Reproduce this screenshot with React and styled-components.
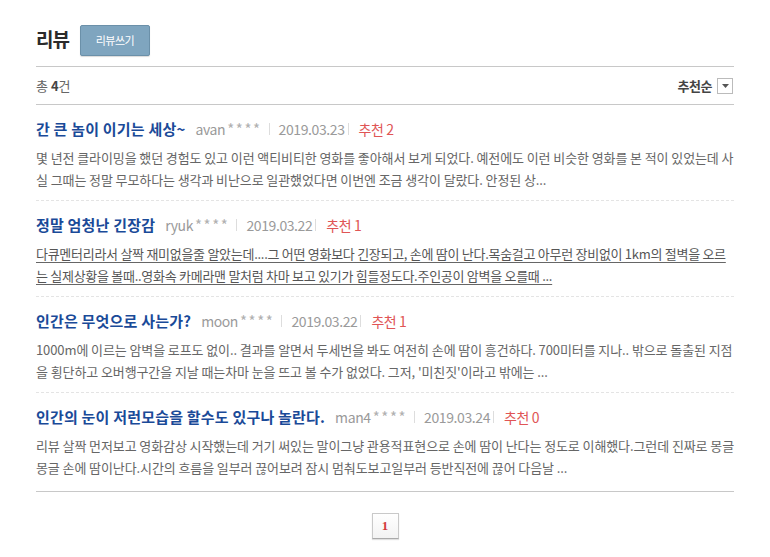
import React from "react";
import styled, { createGlobalStyle } from "styled-components";

const Global = createGlobalStyle`
  html, body { margin: 0; padding: 0; background: #fff; }
  body { font-family: "Noto Sans CJK KR", "Noto Sans", sans-serif; }
`;

const Wrap = styled.div`
  width: 698px;
  padding: 20px 36px 0;
`;

const Head = styled.div`
  display: flex;
  align-items: center;
  gap: 11px;
  height: 46px;
  border-bottom: 1px solid #c8c8c8;
`;

const Title = styled.h2`
  margin: 0;
  font-size: 19px;
  font-weight: 700;
  color: #2b2b2b;
  letter-spacing: -1px;
  line-height: 40px;
  padding-bottom: 8px;
`;

const WriteBtn = styled.button`
  width: 70px;
  height: 31px;
  margin-bottom: 6px;
  background: #7fa5bf;
  border: 1px solid #6b90a9;
  border-radius: 2px;
  color: #fff;
  font-family: inherit;
  font-size: 11px;
  letter-spacing: -0.5px;
  box-shadow: 0 1px 1px rgba(0,0,0,0.15);
`;

const SubBar = styled.div`
  display: flex;
  align-items: center;
  justify-content: space-between;
  height: 37px;
  border-bottom: 1px solid #c8c8c8;
  font-size: 13px;
  color: #666;
`;

const Count = styled.span`
  b { color: #444; font-weight: 700; }
`;

const Sort = styled.div`
  display: flex;
  align-items: center;
  gap: 5px;
  font-weight: 700;
  color: #444;
  font-size: 13px;
  letter-spacing: -0.5px;
`;

const SelBox = styled.span`
  display: inline-flex;
  align-items: center;
  justify-content: center;
  width: 14px;
  height: 14px;
  border: 1px solid #bbb;
  background: #fff;
  margin-right: 1px;
`;

const List = styled.ul`
  list-style: none;
  margin: 0;
  padding: 0;
  border-bottom: 1px solid #c8c8c8;
`;

const Item = styled.li`
  padding: 13px 0 ${p => (p.$last ? "12px" : "9px")};
  border-bottom: ${p => (p.$last ? "none" : "1px dashed #e4e4e4")};
`;

const ItemHead = styled.div`
  display: flex;
  align-items: baseline;
  height: 22px;
  line-height: 22px;
  margin-bottom: 7px;
  white-space: nowrap;
`;

const ItemTitle = styled.span`
  font-size: 15px;
  font-weight: 700;
  color: #1a4a98;
  letter-spacing: 0.2px;
  margin-right: 10px;
`;

const Meta = styled.span`
  font-size: 14px;
  color: ${p => (p.$red ? "#e05555" : "#9a9a9a")};
  letter-spacing: -0.4px;
`;

const Stars = styled.span`
  letter-spacing: 1.6px;
  margin-left: 2px;
  font-size: 15px;
  color: #b0b0b0;
`;

const Sep = styled.span`
  display: inline-block;
  width: 1px;
  height: 12px;
  background: #ddd;
  margin: 0 ${p => p.$r || 9}px 0 ${p => p.$l || 7}px;
`;

const Body = styled.p`
  margin: 0;
  font-size: 13px;
  line-height: 22px;
  color: ${p => (p.$under ? "#555" : "#666")};
  letter-spacing: ${p => p.$track ?? -0.1}px;
  text-decoration: ${p => (p.$under ? "underline" : "none")};
  text-underline-offset: 3px;
  text-decoration-color: #666;
  word-break: break-all;
`;

const Pager = styled.div`
  display: flex;
  justify-content: center;
  padding: 21px 0 20px;
`;

const PageBtn = styled.span`
  display: inline-flex;
  align-items: center;
  justify-content: center;
  width: 25px;
  height: 24px;
  border: 1px solid #c9c9c9;
  border-bottom-color: #aaa;
  background: linear-gradient(#fff, #f3f3f3);
  color: #d23a3a;
  font-family: "Liberation Serif", serif;
  font-weight: 700;
  font-size: 13px;
  box-shadow: 0 1px 1px rgba(0,0,0,0.12);
`;

const reviews = [
  {
    title: "간 큰 놈이 이기는 세상~",
    user: "avan",
    date: "2019.03.23",
    rec: 2,
    body:
      "몇 년전 클라이밍을 했던 경험도 있고 이런 액티비티한 영화를 좋아해서 보게 되었다. 예전에도 이런 비슷한 영화를 본 적이 있었는데 사실 그때는 정말 무모하다는 생각과 비난으로 일관했었다면 이번엔 조금 생각이 달랐다. 안정된 상...",
  },
  {
    title: "정말 엄청난 긴장감",
    user: "ryuk",
    date: "2019.03.22",
    rec: 1,
    under: true,
    track: -0.28,
    body:
      "다큐멘터리라서 살짝 재미없을줄 알았는데....그 어떤 영화보다 긴장되고, 손에 땀이 난다.목숨걸고 아무런 장비없이 1km의 절벽을 오르는 실제상황을 볼때..영화속 카메라맨 말처럼 차마 보고 있기가 힘들정도다.주인공이 암벽을 오를때 ...",
  },
  {
    title: "인간은 무엇으로 사는가?",
    user: "moon",
    date: "2019.03.22",
    rec: 1,
    body:
      "1000m에 이르는 암벽을 로프도 없이.. 결과를 알면서 두세번을 봐도 여전히 손에 땀이 흥건하다. 700미터를 지나.. 밖으로 돌출된 지점을 횡단하고 오버행구간을 지날 때는차마 눈을 뜨고 볼 수가 없었다. 그저, '미친짓'이라고 밖에는 ...",
  },
  {
    title: "인간의 눈이 저런모습을 할수도 있구나 놀란다.",
    user: "man4",
    date: "2019.03.24",
    rec: 0,
    body:
      "리뷰 살짝 먼저보고 영화감상 시작했는데 거기 써있는 말이그냥 관용적표현으로 손에 땀이 난다는 정도로 이해했다.그런데 진짜로 몽글몽글 손에 땀이난다.시간의 흐름을 일부러 끊어보려 잠시 멈춰도보고일부러 등반직전에 끊어 다음날 ...",
  },
];

export default function App() {
  return (
    <>
      <Global />
      <Wrap>
        <Head>
          <Title>리뷰</Title>
          <WriteBtn>리뷰쓰기</WriteBtn>
        </Head>
        <SubBar>
          <Count>
            총 <b>4</b>건
          </Count>
          <Sort>
            추천순
            <SelBox>
              <svg width="7" height="4" viewBox="0 0 7 4">
                <path d="M0 0h7L3.5 4z" fill="#555" />
              </svg>
            </SelBox>
          </Sort>
        </SubBar>
        <List>
          {reviews.map((r, i) => (
            <Item key={i} $last={i === reviews.length - 1}>
              <ItemHead>
                <ItemTitle>{r.title}</ItemTitle>
                <Meta>
                  {r.user}
                  <Stars>****</Stars>
                </Meta>
                <Sep />
                <Meta>{r.date}</Meta>
                <Sep $l={3} $r={10} />
                <Meta $red>추천 {r.rec}</Meta>
              </ItemHead>
              <Body $under={r.under} $track={r.track}>
                {r.body}
              </Body>
            </Item>
          ))}
        </List>
        <Pager>
          <PageBtn>1</PageBtn>
        </Pager>
      </Wrap>
    </>
  );
}
